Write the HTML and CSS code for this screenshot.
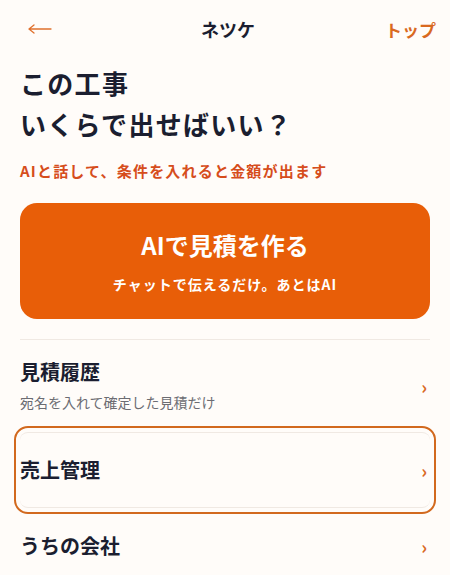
FILE: index.html
```html
<!DOCTYPE html>
<html lang="ja">
<head>
<meta charset="utf-8">
<title>ネツケ</title>
<link rel="stylesheet" href="styles.css">
</head>
<body>
<div class="page">
  <header class="topbar">
    <span class="back" aria-label="戻る">
      <svg width="24" height="12" viewBox="0 0 24 12"><path d="M1 6 H23 M1 6 L6 2 M1 6 L6 10" fill="none" stroke="#e0702c" stroke-width="1.3" stroke-linecap="round"/></svg>
    </span>
    <span class="brand">ネツケ</span>
    <span class="toplink">トップ</span>
  </header>

  <h1 class="headline">この工事<br>いくらで出せばいい？</h1>
  <p class="lead">AIと話して、条件を入れると金額が出ます</p>

  <div class="cta">
    <div class="cta-title">AIで見積を作る</div>
    <div class="cta-sub">チャットで伝えるだけ。あとはAI</div>
  </div>

  <ul class="menu">
    <li class="row">
      <div class="row-text">
        <div class="row-title">見積履歴</div>
        <div class="row-sub">宛名を入れて確定した見積だけ</div>
      </div>
      <span class="chev">›</span>
    </li>
    <li class="row focused">
      <div class="row-text">
        <div class="row-title">売上管理</div>
      </div>
      <span class="chev">›</span>
    </li>
    <li class="row">
      <div class="row-text">
        <div class="row-title">うちの会社</div>
      </div>
      <span class="chev">›</span>
    </li>
  </ul>
</div>
</body>
</html>
```

FILE: styles.css
```css
* { box-sizing: border-box; }

html, body {
  margin: 0;
  padding: 0;
  background: #fffcf9;
}

body {
  font-family: "Noto Sans CJK JP", "Noto Sans", sans-serif;
  color: #1b1e30;
}

.page {
  padding: 0 20px;
}

.topbar {
  height: 58px;
  display: flex;
  align-items: center;
  justify-content: space-between;
  margin: 0 -6px 0 0;
}

.back {
  display: flex;
  align-items: center;
  padding-left: 8px;
  width: 80px;
}

.brand {
  font-size: 18px;
  font-weight: 700;
  color: #1b1e30;
}

.toplink {
  width: 80px;
  text-align: right;
  font-size: 17px;
  font-weight: 700;
  color: #d9691f;
}

.headline {
  margin: 4px 0 0;
  font-size: 26px;
  line-height: 41px;
  font-weight: 700;
  letter-spacing: 0.05em;
  color: #1b1e30;
}

.lead {
  margin: 16px 0 0;
  font-size: 15px;
  line-height: 22px;
  font-weight: 700;
  letter-spacing: 0.08em;
  color: #d64d1c;
}

.cta {
  margin-top: 21px;
  height: 116px;
  border-radius: 17px;
  background: #e85e08;
  color: #fff;
  display: flex;
  flex-direction: column;
  align-items: center;
  justify-content: center;
  gap: 12px;
}

.cta-title {
  font-size: 24px;
  line-height: 34px;
  font-weight: 700;
}

.cta-sub {
  font-size: 14px;
  line-height: 20px;
  font-weight: 700;
  letter-spacing: 1px;
}

.menu {
  list-style: none;
  margin: 20px 0 0;
  padding: 0;
}

.row {
  border-top: 1px solid #f0e9e3;
  min-height: 76px;
  padding: 18px 0;
  display: flex;
  align-items: center;
  justify-content: space-between;
}

.row-title {
  font-size: 20px;
  line-height: 28px;
  font-weight: 700;
  color: #1b1e30;
}

.row-sub {
  margin-top: 4px;
  font-size: 14px;
  line-height: 24px;
  color: #6c6c72;
}

.chev {
  font-size: 18px;
  font-weight: 700;
  color: #d9691f;
  padding-right: 3px;
  line-height: 1;
}

.focused {
  outline: 2px solid #d2691e;
  outline-offset: 4px;
  border-radius: 8px;
  border-bottom: 1px solid #f0e9e3;
}

.focused + .row {
  border-top: none;
}
```
